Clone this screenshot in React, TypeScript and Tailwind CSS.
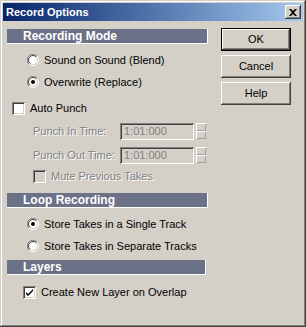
import React from "react";

const raised =
  "shadow-[inset_-1px_-1px_0_#404040,inset_1px_1px_0_#fff,inset_-2px_-2px_0_#808080,inset_2px_2px_0_#d4d0c8]";
const sunken =
  "shadow-[inset_1px_1px_0_#808080,inset_-1px_-1px_0_#fff,inset_2px_2px_0_#404040,inset_-2px_-2px_0_#d4d0c8]";
const disabledText = "text-[#808080] [text-shadow:1px_1px_0_#fff]";

function Radio({ checked }: { checked?: boolean }) {
  return (
    <svg width="12" height="12" viewBox="0 0 12 12" className="shrink-0">
      <circle cx="6" cy="6" r="5.5" fill="none" stroke="#fff" />
      <path d="M1.9 10.1 A5.5 5.5 0 0 1 10.1 1.9" fill="none" stroke="#808080" />
      <circle cx="6" cy="6" r="4.5" fill="#fff" stroke="#d4d0c8" />
      <path d="M2.8 9.2 A4.5 4.5 0 0 1 9.2 2.8" fill="none" stroke="#404040" />
      {checked && <circle cx="6" cy="6" r="2" fill="#000" />}
    </svg>
  );
}

function Check({ checked, disabled }: { checked?: boolean; disabled?: boolean }) {
  return (
    <div
      className={`w-[13px] h-[13px] shrink-0 relative ${sunken} ${
        disabled ? "bg-[#d4d0c8]" : "bg-white"
      }`}
    >
      {checked && (
        <svg width="13" height="13" viewBox="0 0 13 13" className="absolute inset-0">
          <path d="M3 6 L5 8 L10 3 V5 L5 10 L3 8 Z" fill="#000" />
        </svg>
      )}
    </div>
  );
}

function Header({ title, width }: { title: string; width: string }) {
  return (
    <div
      className={`${width} h-[15px] bg-[#6b7186] border-r border-b border-white flex items-center pl-[16px] text-white font-bold text-[12px] leading-none`}
    >
      {title}
    </div>
  );
}

function RadioRow({ label, checked }: { label: string; checked?: boolean }) {
  return (
    <div className="h-[22px] flex items-center gap-[5px] pl-[20px]">
      <Radio checked={checked} />
      <span>{label}</span>
    </div>
  );
}

function TimeRow({ label }: { label: string }) {
  return (
    <div className="h-[24px] flex items-center pl-[26px]">
      <span className={`w-[87px] ${disabledText}`}>{label}</span>
      <div className={`w-[74px] h-[17px] ${sunken} flex items-center pl-[4px] text-[#808080]`}>
        1:01:000
      </div>
      <div className="ml-[2px] w-[10px] flex flex-col">
        <div className="h-[8px] shadow-[inset_1px_1px_0_#fff,inset_-1px_-1px_0_#a0a0a0]" />
        <div className="h-[8px] shadow-[inset_1px_1px_0_#fff,inset_-1px_-1px_0_#a0a0a0]" />
      </div>
    </div>
  );
}

function Button({ label, isDefault }: { label: string; isDefault?: boolean }) {
  return (
    <div
      className={`w-[70px] h-[23px] flex items-center justify-center ${
        isDefault ? "border border-black" : ""
      }`}
    >
      <div className={`w-full h-full flex items-center justify-center ${raised}`}>{label}</div>
    </div>
  );
}

export default function App() {
  return (
    <div className="w-[306px] h-[327px] bg-[#d4d0c8] p-[3px] flex flex-col font-['Liberation_Sans',Arial,sans-serif] text-[11px] text-black shadow-[inset_-1px_-1px_0_#404040,inset_1px_1px_0_#d4d0c8,inset_-2px_-2px_0_#808080,inset_2px_2px_0_#fff]">
      <div className="h-[18px] bg-linear-to-r from-[#0a246a] to-[#a6caf0] flex items-center pl-[3px] pr-[2px]">
        <span className="text-white font-bold text-[11px] flex-1">Record Options</span>
        <div className={`w-[16px] h-[14px] bg-[#d4d0c8] ${raised} flex items-center justify-center`}>
          <svg width="8" height="7" viewBox="0 0 8 7">
            <path d="M0 0 H2 L4 2 L6 0 H8 L5 3.5 L8 7 H6 L4 5 L2 7 H0 L3 3.5 Z" fill="#000" />
          </svg>
        </div>
      </div>

      <div className="flex pt-[7px] pl-[4px]">
        <div className="w-[201px] flex flex-col pt-[1px]">
          <Header title="Recording Mode" width="w-[201px]" />
          <div className="mt-[5px]">
            <RadioRow label="Sound on Sound (Blend)" />
            <RadioRow label="Overwrite (Replace)" checked />
          </div>
          <div className="mt-[4px] h-[22px] flex items-center gap-[5px] pl-[5px]">
            <Check />
            <span>Auto Punch</span>
          </div>
          <TimeRow label="Punch In Time:" />
          <TimeRow label="Punch Out Time:" />
          <div className="h-[18px] flex items-center gap-[5px] pl-[26px]">
            <Check disabled />
            <span className={disabledText}>Mute Previous Takes</span>
          </div>

          <div className="mt-[8px]">
            <Header title="Loop Recording" width="w-[201px]" />
          </div>
          <div className="mt-[5px]">
            <RadioRow label="Store Takes in a Single Track" checked />
            <RadioRow label="Store Takes in Separate Tracks" />
          </div>

          <div className="mt-[3px]">
            <Header title="Layers" width="w-[199px]" />
          </div>
          <div className="mt-[6px] h-[22px] flex items-center gap-[5px] pl-[16px]">
            <Check checked />
            <span>Create New Layer on Overlap</span>
          </div>
        </div>

        <div className="ml-[13px] flex flex-col gap-[4px]">
          <Button label="OK" isDefault />
          <Button label="Cancel" />
          <Button label="Help" />
        </div>
      </div>
    </div>
  );
}
